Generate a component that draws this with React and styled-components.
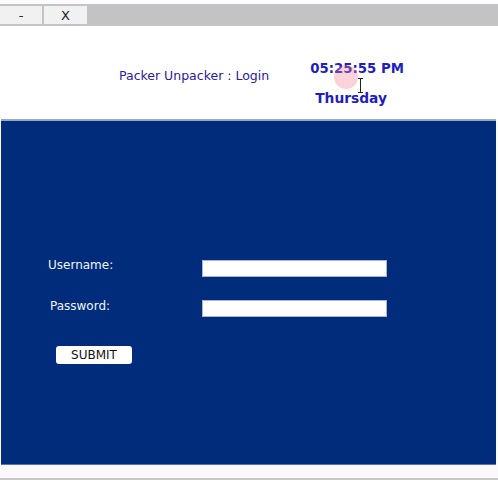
import React from "react";
import styled, { createGlobalStyle } from "styled-components";

const Global = createGlobalStyle`
  html, body {
    margin: 0;
    padding: 0;
    background: #ffffff;
  }
  body {
    font-family: "DejaVu Sans", "Liberation Sans", sans-serif;
  }
`;

const Window = styled.div`
  width: 498px;
  height: 480px;
  display: flex;
  flex-direction: column;
  background: #fdfbfd;
  overflow: hidden;
`;

const TitleBar = styled.div`
  margin-top: 4px;
  height: 22px;
  background: #c3c3c5;
  display: flex;
  align-items: center;
  gap: 2px;
`;

const WinButton = styled.div`
  width: ${(p) => p.w}px;
  height: 18px;
  background: #f1f1f1;
  display: flex;
  align-items: center;
  justify-content: center;
  font-size: 13px;
  color: #222;
`;

const Header = styled.div`
  height: 93px;
  display: flex;
  align-items: flex-start;
  background: #ffffff;
  position: relative;
`;

const AppTitle = styled.div`
  margin: 42px 0 0 119px;
  font-size: 12.5px;
  color: #2a20a0;
`;

const Clock = styled.div`
  margin: 35px 0 0 41px;
  display: flex;
  flex-direction: column;
  align-items: flex-start;
  gap: 14px;
  font-weight: bold;
  color: #1f1fbf;
`;

const Time = styled.div`
  font-size: 13.3px;
`;

const Day = styled.div`
  font-size: 13.8px;
  margin-left: 5px;
`;

const ClickDot = styled.div`
  position: absolute;
  left: 334px;
  top: 39px;
  width: 24px;
  height: 24px;
  border-radius: 50%;
  background: rgba(240, 130, 150, 0.35);
`;

const Caret = styled.div`
  position: absolute;
  left: 360px;
  top: 52px;
  width: 1px;
  height: 15px;
  background: #222;
  &::before,
  &::after {
    content: "";
    position: absolute;
    left: -2px;
    width: 5px;
    height: 1px;
    background: #222;
  }
  &::before { top: 0; }
  &::after { bottom: 0; }
`;

const Panel = styled.div`
  height: 346px;
  margin: 0 2px 0 1px;
  background: #002c7b;
  border-top: 2px solid #9aa6c8;
  border-bottom: 1px solid #5b74a8;
  display: flex;
  flex-direction: column;
  padding: 138px 0 0 0;
  box-sizing: border-box;
`;

const Row = styled.div`
  display: grid;
  grid-template-columns: 201px 185px;
  align-items: center;
  height: 18px;
  margin-bottom: ${(p) => p.gap}px;
`;

const Label = styled.div`
  color: #f2f4fa;
  font-size: 12px;
  padding-left: ${(p) => p.indent}px;
  margin-top: ${(p) => p.lift}px;
`;

const Field = styled.div`
  height: 17px;
  background: #ffffff;
  border: 1px solid #a8b4d8;
  box-sizing: border-box;
`;

const Submit = styled.div`
  margin: 29px 0 0 55px;
  width: 76px;
  height: 18px;
  background: #ffffff;
  border-radius: 3px;
  display: flex;
  align-items: center;
  justify-content: center;
  font-size: 12px;
  color: #111;
`;

const Footer = styled.div`
  flex: 1;
  background: #fbf8fc;
  border-bottom: 2px solid #c8c8c8;
`;

export default function App() {
  return (
    <>
      <Global />
      <Window>
        <TitleBar>
          <WinButton w={42}>-</WinButton>
          <WinButton w={43}>X</WinButton>
        </TitleBar>
        <Header>
          <AppTitle>Packer Unpacker : Login</AppTitle>
          <Clock>
            <Time>05:25:55 PM</Time>
            <Day>Thursday</Day>
          </Clock>
          <ClickDot />
          <Caret />
        </Header>
        <Panel>
          <Row gap={22}>
            <Label indent={47} lift={-6}>Username:</Label>
            <Field />
          </Row>
          <Row gap={0}>
            <Label indent={49} lift={-4}>Password:</Label>
            <Field />
          </Row>
          <Submit>SUBMIT</Submit>
        </Panel>
        <Footer />
      </Window>
    </>
  );
}
